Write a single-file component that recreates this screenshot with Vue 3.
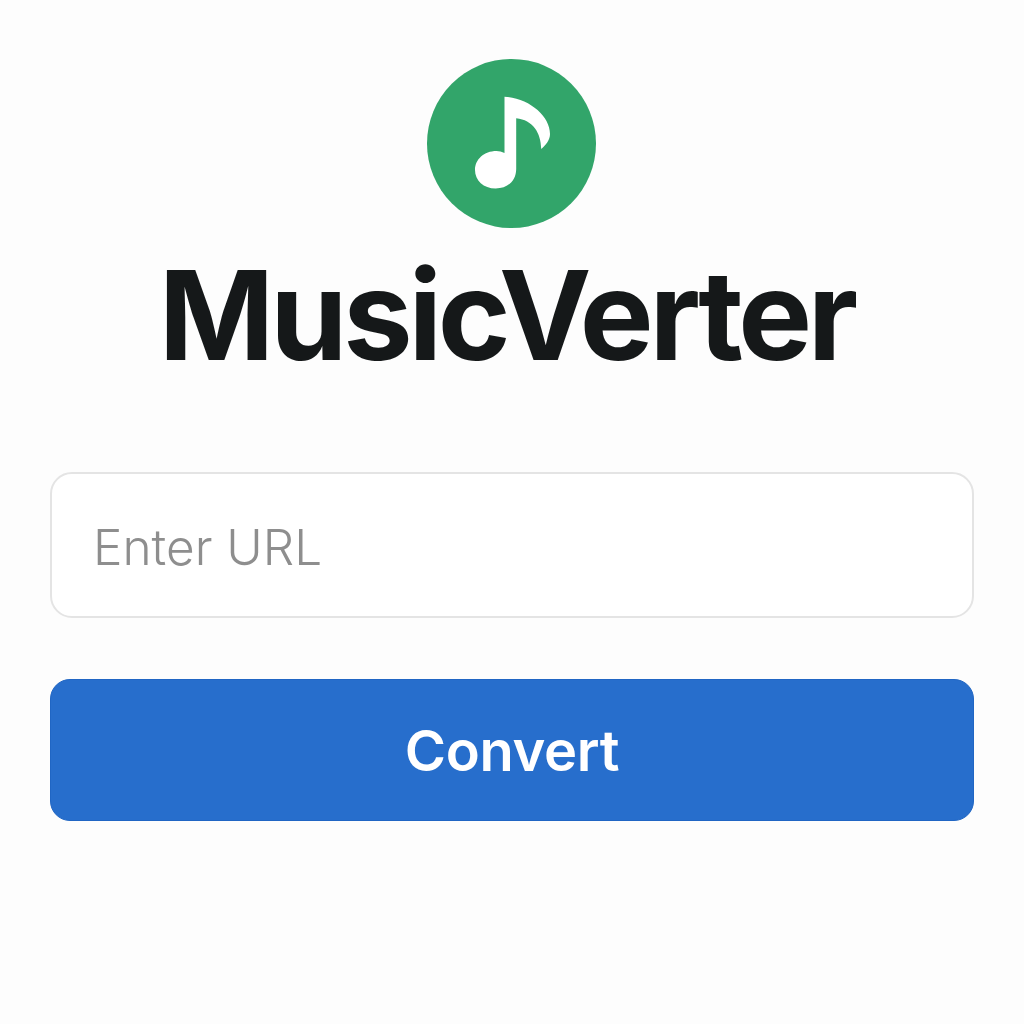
<template>
  <div class="page">
    <svg class="logo" viewBox="0 0 169 169" width="169" height="169">
      <circle cx="84.5" cy="84.5" r="84.5" fill="#32a56a" />
      <path
        fill="#ffffff"
        d="M77.5 37.7 C102 39 123 57 123 75 C123 81 119 86 114.2 90 C114 74 106 61 89.2 59.3 L89.2 110 C89.2 122 80.5 129.5 68.7 129.5 C56.5 129.5 48 121.5 48 111 C48 100.5 57 92 69.5 92 C72 92 75 92.8 77.5 94 Z"
      />
    </svg>
    <h1 class="title">MusicVerter</h1>
    <input class="url-input" type="text" placeholder="Enter URL" />
    <button class="convert-btn" type="button">Convert</button>
  </div>
</template>

<script setup>
</script>

<style>
html,
body {
  margin: 0;
  background: #fdfdfd;
}
</style>

<style scoped>
.page {
  box-sizing: border-box;
  width: 1024px;
  height: 1024px;
  padding: 59px 50px 0;
  display: flex;
  flex-direction: column;
  align-items: center;
  background: #fdfdfd;
}

.logo {
  display: block;
  flex: none;
  margin-left: -1px;
}

.title {
  margin: 12px 0 0 -11px;
  height: 150px;
  line-height: 150px;
  font-family: Inter, "Liberation Sans", sans-serif;
  font-size: 124px;
  font-weight: 700;
  letter-spacing: -4.2px;
  color: #151819;
  white-space: nowrap;
}

.url-input {
  box-sizing: border-box;
  display: block;
  width: 100%;
  height: 146px;
  margin-top: 82px;
  padding: 3px 41px 0;
  border: 2px solid #e4e4e4;
  border-radius: 22px;
  background: #ffffff;
  outline: none;
  font-family: Inter, "Liberation Sans", sans-serif;
  font-size: 49.5px;
  font-weight: 300;
  color: #8e8e8e;
}

.url-input::placeholder {
  color: #8e8e8e;
  opacity: 1;
}

.convert-btn {
  box-sizing: border-box;
  display: block;
  width: 100%;
  height: 142px;
  margin-top: 61px;
  padding-top: 2px;
  border: 1px solid #2066c4;
  border-radius: 20px;
  background: #276ecc;
  font-family: Inter, "Liberation Sans", sans-serif;
  font-size: 56px;
  font-weight: 600;
  letter-spacing: -0.3px;
  color: #ffffff;
}
</style>
